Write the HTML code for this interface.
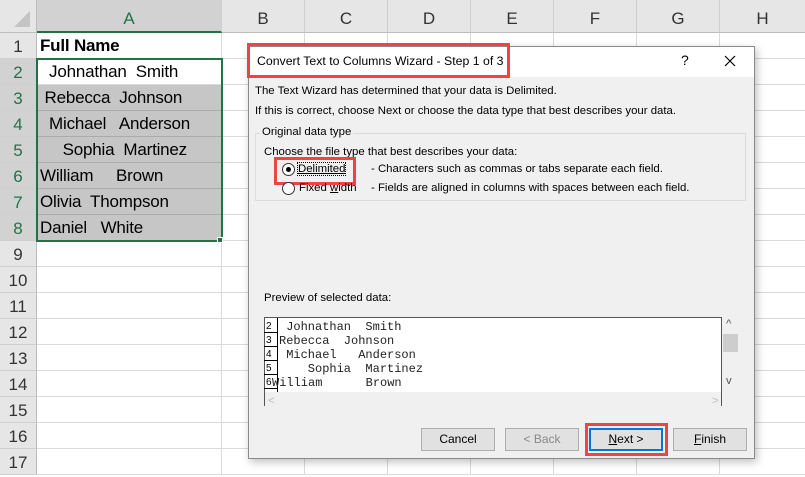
<!DOCTYPE html>
<html><head><style>
*{margin:0;padding:0;box-sizing:border-box}
body{width:805px;height:475px;overflow:hidden;background:#fff;font-family:"Liberation Sans",sans-serif;position:relative}
.a{position:absolute}
.ch{top:0;height:33px;background:#e6e6e6;border-bottom:1px solid #bdbdbd;border-right:1px solid #cfcfcf;font-size:17px;color:#333;text-align:center;line-height:38px}
.rh{left:0;width:37px;height:26px;background:#e6e6e6;border-bottom:1px solid #cfcfcf;border-right:1px solid #bdbdbd;font-size:17px;color:#333;text-align:center;line-height:28px}
.hl{left:37px;right:0;height:1px;background:#dadada}
.vl{top:33px;bottom:0;width:1px;background:#dadada}
.cell{left:38px;width:183px;height:25px;font-size:17px;color:#000;line-height:26px;white-space:pre;letter-spacing:-0.2px}
.dt{font-size:11.4px;color:#000;white-space:pre}
.btn{width:74px;height:23px;background:#e1e1e1;border:1px solid #adadad;font-size:12px;text-align:center;line-height:21px}
.pv{font-family:"Liberation Mono",monospace;font-size:12px;white-space:pre;height:14px;line-height:14px;color:#222;left:279px}
.pn{font-size:10px;left:266px;height:14px;line-height:14px}
</style></head><body>
<div class="a hl" style="top:58px"></div><div class="a hl" style="top:84px"></div><div class="a hl" style="top:110px"></div><div class="a hl" style="top:136px"></div><div class="a hl" style="top:162px"></div><div class="a hl" style="top:188px"></div><div class="a hl" style="top:214px"></div><div class="a hl" style="top:240px"></div><div class="a hl" style="top:266px"></div><div class="a hl" style="top:292px"></div><div class="a hl" style="top:318px"></div><div class="a hl" style="top:344px"></div><div class="a hl" style="top:370px"></div><div class="a hl" style="top:396px"></div><div class="a hl" style="top:422px"></div><div class="a hl" style="top:448px"></div><div class="a hl" style="top:474px"></div>
<div class="a vl" style="left:221px"></div><div class="a vl" style="left:304px"></div><div class="a vl" style="left:387px"></div><div class="a vl" style="left:470px"></div><div class="a vl" style="left:553px"></div><div class="a vl" style="left:636px"></div><div class="a vl" style="left:719px"></div>
<div class="a ch" style="left:0;width:37px;border-right:1px solid #bdbdbd"><svg width="20" height="20" style="position:absolute;right:4px;bottom:3px"><path d="M18 2V18H2Z" fill="#c4c4c4"/></svg></div>
<div class="a ch" style="left:37px;width:185px;background:#d2d2d2;color:#217346;border-bottom:2px solid #217346">A</div>
<div class="a ch" style="left:222px;width:83px">B</div><div class="a ch" style="left:305px;width:83px">C</div><div class="a ch" style="left:388px;width:83px">D</div><div class="a ch" style="left:471px;width:83px">E</div><div class="a ch" style="left:554px;width:83px">F</div><div class="a ch" style="left:637px;width:83px">G</div><div class="a ch" style="left:720px;width:85px;border-right:none">H</div>
<div class="a rh" style="top:33px">1</div>
<div class="a rh" style="top:59px;background:#d2d2d2;color:#217346">2</div><div class="a rh" style="top:85px;background:#d2d2d2;color:#217346">3</div><div class="a rh" style="top:111px;background:#d2d2d2;color:#217346">4</div><div class="a rh" style="top:137px;background:#d2d2d2;color:#217346">5</div><div class="a rh" style="top:163px;background:#d2d2d2;color:#217346">6</div><div class="a rh" style="top:189px;background:#d2d2d2;color:#217346">7</div><div class="a rh" style="top:215px;background:#d2d2d2;color:#217346">8</div>
<div class="a rh" style="top:241px">9</div><div class="a rh" style="top:267px">10</div><div class="a rh" style="top:293px">11</div><div class="a rh" style="top:319px">12</div><div class="a rh" style="top:345px">13</div><div class="a rh" style="top:371px">14</div><div class="a rh" style="top:397px">15</div><div class="a rh" style="top:423px">16</div><div class="a rh" style="top:449px">17</div>
<div class="a cell" style="top:33px;font-weight:bold;padding-left:2px">Full Name</div>
<div class="a" style="left:38px;top:85px;width:183px;height:155px;background:#c6c6c6"></div>
<div class="a hl" style="top:110px;left:38px;right:auto;width:183px;background:#ababab"></div><div class="a hl" style="top:136px;left:38px;right:auto;width:183px;background:#ababab"></div><div class="a hl" style="top:162px;left:38px;right:auto;width:183px;background:#ababab"></div><div class="a hl" style="top:188px;left:38px;right:auto;width:183px;background:#ababab"></div><div class="a hl" style="top:214px;left:38px;right:auto;width:183px;background:#ababab"></div>
<div class="a" style="left:36px;top:58px;width:187px;height:184px;border:2px solid #217346"></div>
<div class="a" style="left:217px;top:237px;width:6px;height:6px;background:#217346;border:1px solid #fff"></div>
<div class="a cell" style="top:59px;left:40px">  Johnathan  Smith</div>
<div class="a cell" style="top:85px;left:40px"> Rebecca  Johnson</div>
<div class="a cell" style="top:111px;left:40px">  Michael   Anderson</div>
<div class="a cell" style="top:137px;left:40px">     Sophia  Martinez</div>
<div class="a cell" style="top:163px;left:40px">William     Brown</div>
<div class="a cell" style="top:189px;left:40px">Olivia  Thompson</div>
<div class="a cell" style="top:215px;left:40px">Daniel   White</div>
<div class="a" style="left:248px;top:46px;width:507px;height:413px;background:#f0f0f0;border:1px solid #8a8a8a;box-shadow:2px 3px 8px rgba(0,0,0,.25)"></div>
<div class="a" style="left:249px;top:47px;width:505px;height:30px;background:#fff"></div>
<div class="a" style="left:247px;top:43px;width:263px;height:35px;border:3px solid #ee4444"></div>
<div class="a dt" style="left:257px;top:53px;font-size:12.3px;line-height:17px">Convert Text to Columns Wizard - Step 1 of 3</div>
<div class="a dt" style="left:681px;top:52px;font-size:14px">?</div>
<svg class="a" style="left:724px;top:55px" width="12" height="12"><path d="M1 1L11 11M11 1L1 11" stroke="#000" stroke-width="1.2"/></svg>
<div class="a dt" style="left:255px;top:85px">The Text Wizard has determined that your data is Delimited.</div>
<div class="a dt" style="left:255px;top:105px">If this is correct, choose Next or choose the data type that best describes your data.</div>
<div class="a" style="left:255px;top:133px;width:491px;height:68px;border:1px solid #dcdcdc"></div>
<div class="a dt" style="left:260px;top:126px;background:#f0f0f0;padding:0 2px">Original data type</div>
<div class="a dt" style="left:264px;top:146px">Choose the file type that best describes your data:</div>
<div class="a" style="left:282px;top:163px;width:13px;height:13px;border-radius:50%;border:1px solid #333;background:#fff"></div>
<div class="a" style="left:286px;top:167px;width:5px;height:5px;border-radius:50%;background:#000"></div>
<div class="a dt" style="left:298px;top:163px;text-decoration:underline;outline:1px dotted #000">Delimited</div>
<div class="a" style="left:274px;top:157px;width:82px;height:28px;border:3px solid #ee4444"></div>
<div class="a dt" style="left:371px;top:163px">- Characters such as commas or tabs separate each field.</div>
<div class="a" style="left:282px;top:182px;width:13px;height:13px;border-radius:50%;border:1px solid #333;background:#fff"></div>
<div class="a dt" style="left:299px;top:182px">Fixed <u>w</u>idth</div>
<div class="a dt" style="left:371px;top:182px">- Fields are aligned in columns with spaces between each field.</div>
<div class="a dt" style="left:264px;top:292px">Preview of selected data:</div>
<div class="a" style="left:264px;top:317px;width:458px;height:89px;background:#fff;border:1px solid #555;border-bottom:none"></div>
<div class="a" style="left:722px;top:317px;width:23px;height:76px;background:#f0f0f0"></div>
<div class="a" style="left:723px;top:334px;width:15px;height:18px;background:#cdcdcd"></div>
<div class="a dt" style="left:726px;top:318px;color:#555">^</div>
<div class="a dt" style="left:726px;top:375px;color:#555">v</div>
<div class="a" style="left:264px;top:318px;width:14px;height:75px;border-right:1px solid #000"></div>
<div class="a" style="left:264px;top:332px;width:14px;height:1px;background:#000"></div><div class="a" style="left:264px;top:346px;width:14px;height:1px;background:#000"></div><div class="a" style="left:264px;top:360px;width:14px;height:1px;background:#000"></div><div class="a" style="left:264px;top:374px;width:14px;height:1px;background:#000"></div><div class="a" style="left:264px;top:388px;width:14px;height:1px;background:#000"></div>
<div class="a pn" style="top:320px">2</div><div class="a pn" style="top:334px">3</div><div class="a pn" style="top:348px">4</div><div class="a pn" style="top:362px">5</div><div class="a pn" style="top:376px">6</div>
<div class="a pv" style="top:320px"> Johnathan  Smith</div>
<div class="a pv" style="top:334px">Rebecca  Johnson</div>
<div class="a pv" style="top:348px"> Michael   Anderson</div>
<div class="a pv" style="top:362px">    Sophia  Martinez</div>
<div class="a pv" style="top:376px;left:272px">William      Brown</div>
<div class="a" style="left:265px;top:392px;width:456px;height:14px;background:#f0f0f0"></div>
<div class="a dt" style="left:268px;top:395px;color:#bbb">&lt;</div><div class="a dt" style="left:712px;top:395px;color:#bbb">&gt;</div>
<div class="a btn" style="left:421px;top:428px">Cancel</div>
<div class="a btn" style="left:505px;top:428px;color:#888">&lt; Back</div>
<div class="a btn" style="left:589px;top:428px;border:2px solid #0078d7;line-height:19px"><u>N</u>ext &gt;</div>
<div class="a" style="left:585px;top:423px;width:83px;height:33px;border:3px solid #ee4444"></div>
<div class="a btn" style="left:673px;top:428px"><u>F</u>inish</div>
</body></html>
